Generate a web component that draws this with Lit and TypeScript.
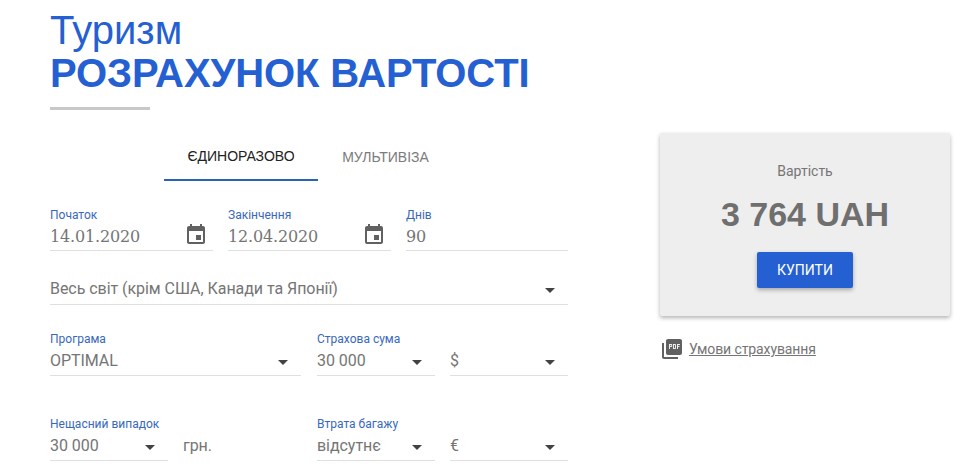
import { LitElement, html, css } from "lit";
import { customElement } from "lit/decorators.js";

const cal = html`<svg class="ic" viewBox="0 0 24 24" width="24" height="24"><path fill="#616161" d="M17 12h-5v5h5v-5zM16 1v2H8V1H6v2H5c-1.11 0-1.99.9-1.99 2L3 19c0 1.1.89 2 2 2h14c1.1 0 2-.9 2-2V5c0-1.1-.9-2-2-2h-1V1h-2zm3 18H5V8h14v11z"/></svg>`;
const caret = html`<span class="caret"></span>`;

@customElement("app-root")
export class AppRoot extends LitElement {
  static styles = css`
    :host { display: block; width: 976px; height: 474px; overflow: hidden; background: #fff; font-family: Roboto, sans-serif; color: #757575; }
    .page { display: flex; padding-left: 50px; align-items: flex-start; }
    .left { width: 518px; flex: none; }
    .right { width: 290px; margin-left: 92px; margin-top: 133px; flex: none; }
    h1 { margin: 0; font-family: "Liberation Sans", sans-serif; color: #2460d2; font-size: 40px; line-height: 42px; font-weight: 400; padding-top: 9px; }
    h2 { margin: 0; font-family: "Liberation Sans", sans-serif; color: #2460d2; font-size: 40px; line-height: 44px; font-weight: 700; letter-spacing: -0.1px; }
    .rule { width: 100px; height: 3px; background: #c8c8c8; margin-top: 12px; }
    .tabs { display: flex; justify-content: center; margin-top: 23px; padding-right: 1px; height: 48px; font-size: 14px; font-family: "Liberation Sans", sans-serif; }
    .tab { width: 135px; height: 48px; box-sizing: border-box; display: flex; align-items: center; justify-content: center; padding-bottom: 1px; color: #7b7b7b; }
    .tab.on { width: 154px; color: #212121; border-bottom: 2px solid #2a62b8; padding-bottom: 0; }
    .row { display: flex; gap: 15px; }
    .r1 { margin-top: 27px; display: grid; grid-template-columns: 163px 163px 162px; }
    .r2 { margin-top: 9px; }
    .r3 { margin-top: 27px; }
    .r4 { margin-top: 41px; }
    .f { flex: 1 1 0; min-width: 0; height: 43px; display: flex; flex-direction: column; border-bottom: 1px solid #e0e0e0; }
    .r1 .f { height: 42px; }
    .r2 .f { height: 44px; }
    .f.wide { margin-right: 1px; }
    .f.fixed { flex: 0 0 118px; }
    .f.plain { border-bottom-color: transparent; }
    .l { font-size: 12px; line-height: 14px; color: #3868bd; height: 14px; }
    .v { font-size: 16px; line-height: 24px; height: 24px; display: flex; justify-content: space-between; align-items: center; color: #757575; padding-top: 3px; letter-spacing: -0.05px; }
    .v.serif { font-family: "DejaVu Serif", serif; letter-spacing: -0.15px; }
    .ic { display: block; margin-top: -4px; margin-right: 5px; }
    .caret { width: 0; height: 0; border-left: 5px solid transparent; border-right: 5px solid transparent; border-top: 5px solid #424242; margin-right: 13px; margin-top: 2px; }
    .pair { flex: 0 0 252px; display: flex; gap: 15px; }
    .card { height: 183px; background: #eee; border-radius: 2px; box-shadow: 0 2px 4px rgba(0,0,0,.3); display: flex; flex-direction: column; align-items: center; }
    .cap { font-size: 14px; line-height: 20px; margin-top: 28px; color: #757575; }
    .price { font-family: "Liberation Sans", sans-serif; font-weight: 700; font-size: 34px; line-height: 36px; color: #6f6f6f; margin-top: 15px; }
    .btn { margin-top: 20px; width: 96px; height: 36px; background: #2460d2; color: #fff; border-radius: 2px; display: flex; align-items: center; justify-content: center; font-size: 14px; box-shadow: 0 2px 4px rgba(0,0,0,.3); }
    .link { display: flex; align-items: center; gap: 5px; margin-top: 21px; font-size: 14px; line-height: 24px; color: #757575; letter-spacing: -0.1px; }
    .link span { text-decoration: underline; }
  `;

  private field(label: string, value: string, opts: { cls?: string; after?: unknown; serif?: boolean } = {}) {
    return html`<div class="f ${opts.cls ?? ""}"><div class="l">${label}</div><div class="v ${opts.serif ? "serif" : ""}"><span>${value}</span>${opts.after ?? ""}</div></div>`;
  }

  render() {
    return html`<div class="page">
      <div class="left">
        <h1>Туризм</h1>
        <h2>РОЗРАХУНОК ВАРТОСТІ</h2>
        <div class="rule"></div>
        <div class="tabs"><div class="tab on">ЄДИНОРАЗОВО</div><div class="tab">МУЛЬТИВІЗА</div></div>
        <div class="row r1">
          ${this.field("Початок", "14.01.2020", { serif: true, after: cal })}
          ${this.field("Закінчення", "12.04.2020", { serif: true, after: cal })}
          ${this.field("Днів", "90", { serif: true })}
        </div>
        <div class="row r2">${this.field("", "Весь світ (крім США, Канади та Японії)", { after: caret })}</div>
        <div class="row r3">
          <div class="pair">${this.field("Програма", "OPTIMAL", { cls: "wide", after: caret })}</div>
          ${this.field("Страхова сума", "30 000", { after: caret })}
          ${this.field("", "$", { after: caret })}
        </div>
        <div class="row r4">
          <div class="pair">
            ${this.field("Нещасний випадок", "30 000", { cls: "fixed", after: caret })}
            ${this.field("", "грн.", { cls: "plain" })}
          </div>
          ${this.field("Втрата багажу", "відсутнє", { after: caret })}
          ${this.field("", "€", { after: caret })}
        </div>
      </div>
      <div class="right">
        <div class="card">
          <div class="cap">Вартість</div>
          <div class="price">3 764 UAH</div>
          <div class="btn">КУПИТИ</div>
        </div>
        <div class="link">
          <svg viewBox="0 0 24 24" width="24" height="24"><path fill="#616161" d="M20 2H8c-1.1 0-2 .9-2 2v12c0 1.1.9 2 2 2h12c1.1 0 2-.9 2-2V4c0-1.1-.9-2-2-2zM4 6H2v14c0 1.1.9 2 2 2h14v-2H4V6z"/><path fill="#eee" d="M9 7h2.2c.6 0 1 .4 1 1v1c0 .6-.4 1-1 1H10v2H9V7zm1 1v1h1.2V8H10zm3-1h2c.6 0 1 .4 1 1v3c0 .6-.4 1-1 1h-2V7zm1 1v3h1V8h-1zm3-1h3v1h-2v1h1.5v1H18v2h-1V7z"/></svg>
          <span>Умови страхування</span>
        </div>
      </div>
    </div>`;
  }
}
